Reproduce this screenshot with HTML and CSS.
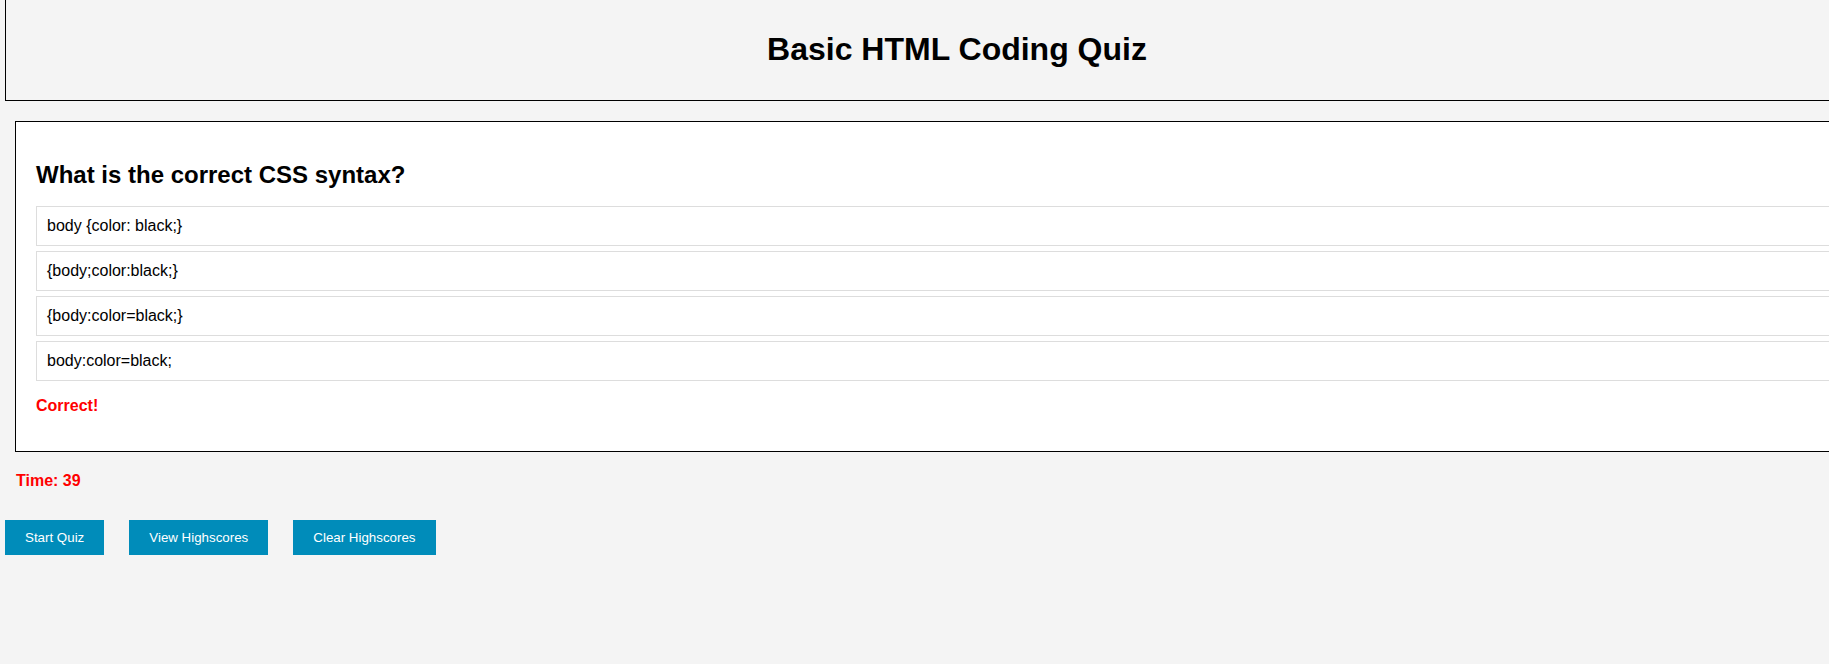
FILE: index.html
```html
<!DOCTYPE html>
<html lang="en">
<head>
<meta charset="utf-8">
<title>Basic HTML Coding Quiz</title>
<link rel="stylesheet" href="styles.css">
</head>
<body>
<div class="page">
  <header class="site-header">
    <h1 class="title">Basic HTML Coding Quiz</h1>
  </header>
  <section class="quiz">
    <h2 class="question">What is the correct CSS syntax?</h2>
    <div class="options">
      <div class="option">body {color: black;}</div>
      <div class="option">{body;color:black;}</div>
      <div class="option">{body:color=black;}</div>
      <div class="option">body:color=black;</div>
    </div>
    <p class="feedback">Correct!</p>
  </section>
  <p class="timer">Time: 39</p>
  <div class="controls">
    <button class="btn" type="button">Start Quiz</button>
    <button class="btn" type="button">View Highscores</button>
    <button class="btn" type="button">Clear Highscores</button>
  </div>
</div>
</body>
</html>
```
FILE: styles.css
```css
html, body {
  margin: 0;
  padding: 0;
}
body {
  background: #f4f4f4;
  font-family: "Liberation Sans", Arial, sans-serif;
  color: #000;
  overflow-x: hidden;
}
.page {
  width: 1904px;
  padding-left: 5px;
}
.site-header {
  border: 1px solid #000;
  margin-top: -1px;
  padding: 31px 0 32px;
  text-align: center;
}
.title {
  margin: 0;
  font-size: 32px;
  line-height: 37px;
  font-weight: bold;
}
.quiz {
  margin: 20px 0 0 10px;
  background: #fff;
  border: 1px solid #000;
  padding: 20px;
}
.question {
  margin: 19px 0 17px;
  font-size: 24px;
  line-height: 28px;
  font-weight: bold;
}
.options {
  display: flex;
  flex-direction: column;
  gap: 5px;
}
.option {
  border: 1px solid #ddd;
  padding: 10px;
  font-size: 16px;
  line-height: 18px;
  background: #fff;
}
.feedback {
  margin: 16px 0;
  color: #ff0000;
  font-weight: bold;
  font-size: 16px;
  line-height: 18px;
}
.timer {
  margin: 20px 0 0 11px;
  color: #ff0000;
  font-weight: bold;
  font-size: 16px;
  line-height: 18px;
}
.controls {
  display: flex;
  gap: 25px;
  margin-top: 30px;
}
.btn {
  background: #008cba;
  color: #fff;
  border: none;
  padding: 10px 20px;
  font-family: "Liberation Sans", Arial, sans-serif;
  font-size: 13.333px;
  line-height: 15px;
  margin: 0;
}
```
